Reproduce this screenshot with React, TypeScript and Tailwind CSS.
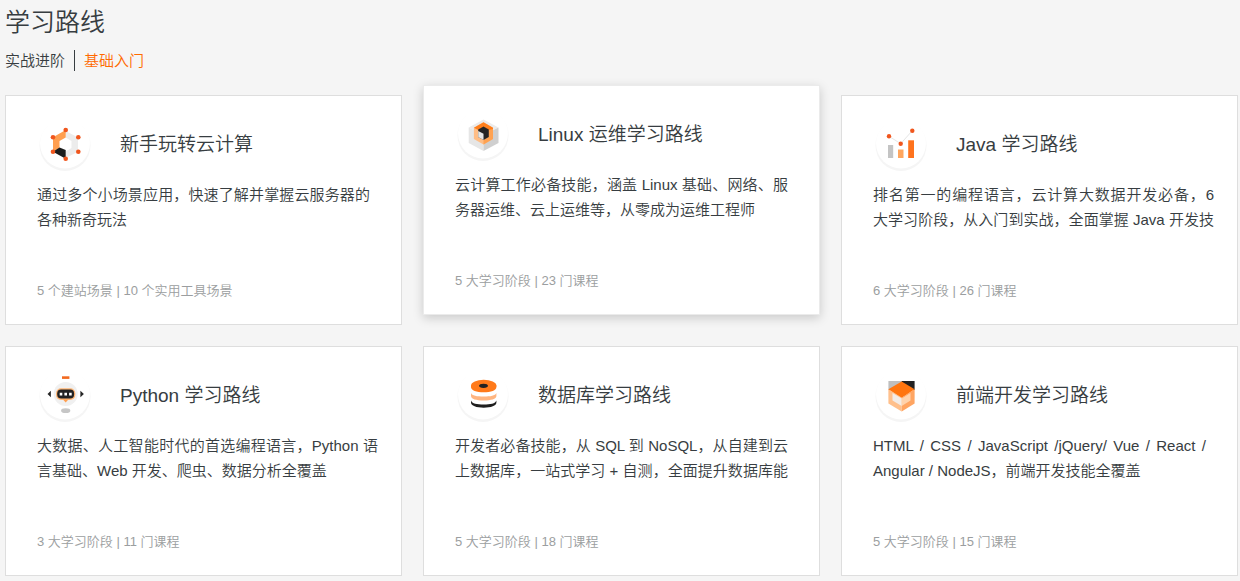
import React, { useState } from 'react';

interface Course {
    title: string;
    description: string;
    meta: string;
    icon: React.ReactNode;
    // lines that need a little more room than the padding leaves
    wide?: boolean;
    // the description runs on to the end of its second line
    full?: boolean;
}

// Hexagon ring with six nodes
const CloudIcon = () => (
    <>
        <path d="M28.7 14 41 20.5V34.7L28.7 41V34.5L34.5 31V24L28.7 20.5Z" fill="#ececec" />
        <path d="M28.7 13V20.5L22.5 24V31L16 34.7V20.3Z" fill="#ff9f50" />
        <path d="M16 34.7 22.5 30.5 28.7 33V41.8Z" fill="#1c1c1c" />
        <g fill="#f0561d">
            <circle cx="28.7" cy="13" r="2.3" />
            <circle cx="16" cy="20.3" r="2.3" />
            <circle cx="41.3" cy="20.3" r="2.3" />
            <circle cx="16" cy="34.7" r="2.3" />
            <circle cx="41.3" cy="34.7" r="2.3" />
            <circle cx="28.7" cy="41.8" r="2.3" />
        </g>
    </>
);

// Nested cubes
const LinuxIcon = () => (
    <>
        <path d="M28.5 12.5 43.5 20.5 28.5 28 13.7 20.5Z" fill="#ebebeb" />
        <path d="M13.7 20.5 28.5 28V44L13.7 36Z" fill="#e6e6e6" />
        <path d="M43.5 20.5V36L28.5 44V28Z" fill="#cfcfcf" />
        <path d="M28.5 15.3 38 20.8V32L28.5 37.5 18.9 32V20.8Z" fill="#ffbd85" />
        <path d="M28.5 15.3 38 20.8V32L33.7 29.8V23L28.5 20 23.3 23 18.9 20.8Z" fill="#ff7f1c" />
        <path d="M38 22V32L28.5 37.5V33L33.7 30V23Z" fill="#ffa251" />
        <path d="M28.5 19.5 33.8 22.5V30L28.5 33 23.2 30V22.5Z" fill="#242424" />
        <path d="M23.2 24 28.5 26.8V33L23.2 30Z" fill="#e6e6e6" />
    </>
);

// Bars with a trend line
const JavaIcon = () => (
    <>
        <path d="M16 19.3 27.7 26.7 39.3 13.7" fill="none" stroke="#e6e6e6" strokeWidth="1" />
        <path d="M15 28H20.2V41H15Z" fill="#c4c4c4" />
        <path d="M25 32.5H30.5V41H25Z" fill="#ffa65e" />
        <path d="M35.2 23.3H41V41H35.2Z" fill="#ff731d" />
        <g fill="#f0561d">
            <circle cx="16" cy="19.3" r="2.2" />
            <circle cx="27.7" cy="26.7" r="2.2" />
            <circle cx="39.3" cy="13.7" r="2.2" />
        </g>
    </>
);

// Robot face
const PythonIcon = () => (
    <>
        <circle cx="28.7" cy="26" r="12" fill="#f0f0f0" />
        <rect x="25" y="8.3" width="7.4" height="2.6" fill="#f26a20" />
        <path d="M10.5 26 13.9 22.8V29.2Z" fill="#262626" />
        <path d="M46.9 26 43.4 22.8V29.2Z" fill="#262626" />
        <rect x="19" y="20.2" width="19.3" height="11.8" rx="5" fill="#ffb676" />
        <path d="M26 31.5H31.4L28.7 34.5Z" fill="#ff9f50" />
        <rect x="20.2" y="21.6" width="16.9" height="9" rx="4" fill="#222" />
        <path d="M22.7 24.8H25.3V27.4H22.7ZM27.4 24.8H30V27.4H27.4ZM32.1 24.8H34.7V27.4H32.1Z" fill="#fff" />
        <ellipse cx="28.7" cy="42.7" rx="4.6" ry="2.4" fill="#c6c6c6" />
    </>
);

// Stacked discs
const DatabaseIcon = () => (
    <>
        <path d="M16 32.5C17 35.7 22 36.5 28.7 36.5S40.3 35.7 41.4 32.5V34.5C41.4 37.8 36 39.7 28.7 39.7S16 37.8 16 34.5Z" fill="#1f1f1f" />
        <path d="M16 25C17 27.8 22 28.5 28.7 28.5S40.3 27.8 41.4 25V28C41.4 31 36 32.5 28.7 32.5S16 31 16 28Z" fill="#ffb580" />
        <path d="M16 17.5V19C16 22.5 21.5 24.3 28.7 24.3S41.4 22.5 41.4 19V17.5Z" fill="#ff7a1a" />
        <ellipse cx="28.7" cy="17.5" rx="12.7" ry="5.8" fill="#ff7a1a" />
        <ellipse cx="28.5" cy="17.8" rx="4.4" ry="2.1" fill="#222" />
    </>
);

// Open cube
const FrontendIcon = () => (
    <>
        <path d="M15.4 13H28.7V22H15.4Z" fill="#bfbfbf" />
        <path d="M28.7 13H41.6V22H28.7Z" fill="#222" />
        <path d="M15.4 21.3 28.7 29.7V43.5L15.4 35.5Z" fill="#ffc08c" />
        <path d="M41.6 21.3V35.5L28.7 43.5V29.7Z" fill="#ffa562" />
        <path d="M19.5 25 28.7 30.5V38L19.5 32.5Z" fill="#f3ece7" />
        <path d="M37.5 25V32.5L28.7 38V30.5Z" fill="#ffd2ab" />
        <path d="M28.7 13.5 41.6 21.3 28.7 29.7 15.4 21.3Z" fill="#ff750f" />
    </>
);

const courses: Course[] = [
    {
        title: '新手玩转云计算',
        description: '通过多个小场景应用，快速了解并掌握云服务器的各种新奇玩法',
        meta: '5 个建站场景 | 10 个实用工具场景',
        icon: <CloudIcon />,
    },
    {
        title: 'Linux 运维学习路线',
        description: '云计算工作必备技能，涵盖 Linux 基础、网络、服务器运维、云上运维等，从零成为运维工程师',
        meta: '5 大学习阶段 | 23 门课程',
        icon: <LinuxIcon />,
    },
    {
        title: 'Java 学习路线',
        description: '排名第一的编程语言，云计算大数据开发必备，6 大学习阶段，从入门到实战，全面掌握 Java 开发技',
        meta: '6 大学习阶段 | 26 门课程',
        icon: <JavaIcon />,
        wide: true,
        full: true,
    },
    {
        title: 'Python 学习路线',
        description: '大数据、人工智能时代的首选编程语言，Python 语言基础、Web 开发、爬虫、数据分析全覆盖',
        meta: '3 大学习阶段 | 11 门课程',
        icon: <PythonIcon />,
        wide: true,
    },
    {
        title: '数据库学习路线',
        description: '开发者必备技能，从 SQL 到 NoSQL，从自建到云上数据库，一站式学习 + 自测，全面提升数据库能',
        meta: '5 大学习阶段 | 18 门课程',
        icon: <DatabaseIcon />,
        full: true,
    },
    {
        title: '前端开发学习路线',
        description: 'HTML / CSS / JavaScript /jQuery/ Vue / React / Angular / NodeJS，前端开发技能全覆盖',
        meta: '5 大学习阶段 | 15 门课程',
        icon: <FrontendIcon />,
    },
];

const tabs = ['实战进阶', '基础入门'];

export default function App() {
    const [activeTab, setActiveTab] = useState(1);
    const [raised, setRaised] = useState(1);

    return (
        <main
            lang="zh-CN"
            className="min-h-screen bg-[#f5f5f5] pt-1 pr-0.5 pb-[5px] pl-[5px] font-['Liberation_Sans','Noto_Sans_CJK_SC',sans-serif] font-[350] text-[#373d41]"
        >
            <h1 className="text-[25px] leading-9">学习路线</h1>
            <div className="mt-2.5 mb-6 flex h-[21px] items-center text-[15px] leading-5">
                {tabs.map((tab, index) => (
                    <button
                        key={tab}
                        type="button"
                        onClick={() => setActiveTab(index)}
                        className={`h-full cursor-pointer ${index > 0 ? 'ml-[9px] border-l border-[#373d41] pl-[9px]' : ''} ${activeTab === index ? 'text-[#ff6a00]' : ''}`}
                    >
                        {tab}
                    </button>
                ))}
            </div>

            <div className="grid grid-cols-3 gap-[21px]">
                {courses.map((course, index) => (
                    <a
                        key={course.title}
                        href="#"
                        onMouseEnter={() => setRaised(index)}
                        className={`flex flex-col border bg-white px-[31px] pt-[21px] pb-[23px] ${raised === index ? '-translate-y-2.5 border-[#ebebeb] shadow-[0_3px_10px_rgba(0,0,0,0.18)]' : 'border-[#dedede]'}`}
                    >
                        <div className="flex items-center gap-[27px]">
                            <svg viewBox="0 0 56 56" className="h-14 w-14 shrink-0" aria-hidden="true">
                                <circle cx="28" cy="28.5" r="25.5" fill="#f5f5f5" />
                                <circle cx="28" cy="26.5" r="25" fill="#fff" />
                                {course.icon}
                            </svg>
                            <h2 className="text-[19px] leading-7">{course.title}</h2>
                        </div>
                        <p className={`mt-[9px] min-h-[50px] text-justify text-[15px] leading-[25px] ${course.wide ? '-mr-2' : ''} ${course.full ? '[text-align-last:justify]' : ''}`}>
                            {course.description}
                        </p>
                        <p className="mt-[49px] text-[13px] leading-5 text-[#9b9ea0]">{course.meta}</p>
                    </a>
                ))}
            </div>
        </main>
    );
}
